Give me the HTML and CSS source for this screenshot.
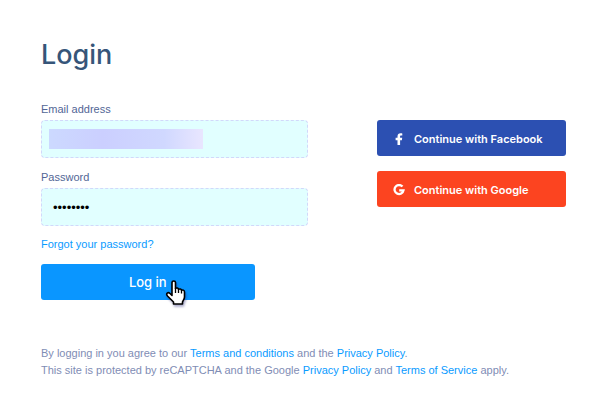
FILE: index.html
```html
<!DOCTYPE html>
<html lang="en">
<head>
    <meta charset="UTF-8">
    <meta name="viewport" content="width=device-width, initial-scale=1.0">
    <title>Login</title>
    <link rel="stylesheet" href="styles.css">
</head>
<body>

<main class="login-page">
    <h1>Login</h1>

    <div class="login-columns">
        <form class="login-form">
            <label for="email">Email address</label>
            <input type="email" id="email" class="email-hidden">

            <label for="password">Password</label>
            <input type="password" id="password" value="password">

            <a href="#" class="forgot-link">Forgot your password?</a>

            <div class="submit-row">
                <button type="submit" class="submit-btn">Log in</button>
                <svg class="cursor" viewBox="0 0 22 27" aria-hidden="true">
                    <path d="M7 2.5C7 .5 10.5.5 10.5 2.5V8.5C11.5 7.5 13.5 8 13.5 9.5C14.5 8.5 16.5 9 16.5 10.5C17.5 9.5 19.5 10 19.5 12V17C19.5 19 18 20.5 17.5 22V24H8.500V22L2.500 16C.5 13.500 3 11.500 5 13.500L7 15.500Z" fill="#fff" stroke="#000" stroke-width="1.6" stroke-linejoin="round"/>
                    <path d="M10.500 8V13M13.500 9.500V13M16.500 10.500V13.500" fill="none" stroke="#000" stroke-width="1.300"/>
                </svg>
            </div>
        </form>

        <div class="social-login">
            <button type="button" class="social-btn facebook">
                <svg viewBox="0 0 12 12" aria-hidden="true">
                    <path d="M4.500 12V7.200H2.600V4.700H4.500V3.400C4.500 1.200 5.700.2 7.500.2C8.300.2 9 .3 9.300.4V2.500H8.200C7.300 2.500 7.100 2.900 7.100 3.500V4.700H9.200L8.900 7.200H7.100V12Z" fill="#fff"/>
                </svg>
                Continue with Facebook
            </button>
            <button type="button" class="social-btn google">
                <svg viewBox="0 0 12 12" aria-hidden="true">
                    <path d="M9.500 2.600A4.500 4.500 0 1 0 10.500 6.300H6.200" fill="none" stroke="#fff" stroke-width="2.300"/>
                </svg>
                Continue with Google
            </button>
        </div>
    </div>

    <p class="legal">
        By logging in you agree to our <a href="#">Terms and conditions</a> and the <a href="#">Privacy Policy</a>.<br>
        This site is protected by reCAPTCHA and the Google <a href="#">Privacy Policy</a> and <a href="#">Terms of Service</a> apply.
    </p>
</main>

</body>
</html>
```
FILE: styles.css
```css
* {
    box-sizing: border-box;
}

body {
    background-color: #fff;
    color: #526696;
    font-family: "Liberation Sans", Arial, sans-serif;
    font-size: 11px;
    line-height: 17px;
    margin: 0;
}

.login-page {
    padding: 38px 41px 24px;
}

h1 {
    color: #365579;
    font-family: Inter, "Liberation Sans", sans-serif;
    font-size: 27px;
    font-weight: 500;
    line-height: 34px;
    margin: 0 0 29px;
}

.login-columns {
    display: grid;
    grid-template-columns: 267fr 189fr;
    column-gap: 69px;
}

.login-form {
    display: flex;
    flex-direction: column;
}

label {
    margin-bottom: 2px;
}

input {
    width: 100%;
    height: 38px;
    padding: 0 11px;
    margin-bottom: 11px;
    background-color: #e1ffff;
    border: 1px dashed #d2d8fa;
    border-radius: 4px;
    color: #000;
    font-family: inherit;
    font-size: 13px;
}

.email-hidden {
    background-image: linear-gradient(90deg, #ccd9ff, #cbcfff 35%, #d0d8ff 75%, #e9e6ff);
    background-size: 154px 20px;
    background-position: 7px center;
    background-repeat: no-repeat;
}

a {
    color: #0a9bff;
    text-decoration: none;
}

.forgot-link {
    align-self: flex-start;
    margin-top: -1px;
}

.submit-row {
    position: relative;
    width: 80%;
    margin-top: 11px;
}

button {
    height: 36px;
    border: none;
    border-radius: 3px;
    color: #fff;
    font-family: Inter, "Liberation Sans", sans-serif;
    font-weight: 500;
    cursor: pointer;
}

.submit-btn {
    display: block;
    width: 100%;
    background-color: #0a96ff;
    font-size: 13px;
}

.cursor {
    position: absolute;
    top: 16px;
    left: 58%;
    width: 22px;
    height: 27px;
    filter: drop-shadow(1px 2px 1px rgba(40, 40, 120, 0.4));
    pointer-events: none;
}

.social-login {
    display: flex;
    flex-direction: column;
    gap: 15px;
    padding-top: 19px;
}

.social-btn {
    display: flex;
    align-items: center;
    gap: 9px;
    padding: 2px 16px 0;
    font-size: 11px;
    font-weight: 600;
    white-space: nowrap;
}

.social-btn svg {
    width: 12px;
    height: 12px;
}

.facebook {
    background-color: #2c50b2;
}

.google {
    background-color: #fc4420;
}

.legal {
    color: #7f8db5;
    margin: 45px 0 0;
}
```
